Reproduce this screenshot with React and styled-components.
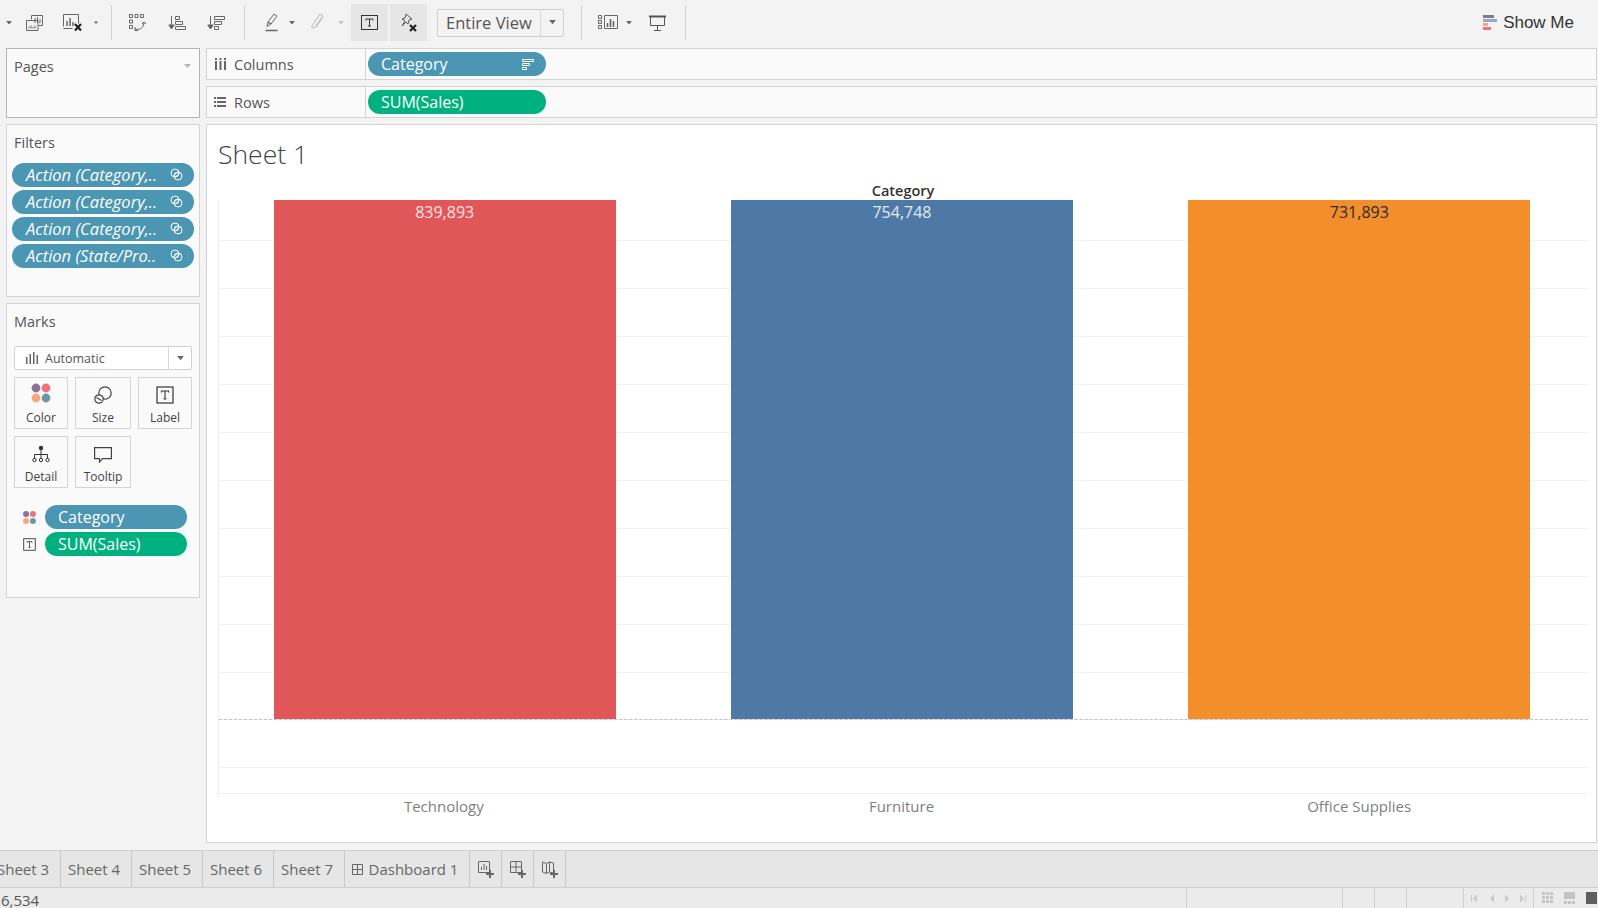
import React from "react";
import styled, { createGlobalStyle } from "styled-components";

const GlobalStyle = createGlobalStyle`
  html, body { margin: 0; padding: 0; background: #f3f3f3; }
  * { box-sizing: border-box; }
`;

const FONT = `"Open Sans", Lato, "Liberation Sans", sans-serif`;
const BLUE_PILL = "#4a96b3";
const GREEN_PILL = "#00b180";

const filters = ["Action (Category,..", "Action (Category,..", "Action (Category,..", "Action (State/Pro.."];
const bars = [
  { name: "Technology", value: "839,893", color: "#e15759", text: "#fbe3e3" },
  { name: "Furniture", value: "754,748", color: "#4e79a7", text: "#e3eaf2" },
  { name: "Office Supplies", value: "731,893", color: "#f28e2b", text: "#2b2b2b" },
];
const tabs = ["Sheet 3", "Sheet 4", "Sheet 5", "Sheet 6", "Sheet 7"];
const statusCells = [156, 32, 32, 57];

const Dots = ({ size = 22 }) => (
  <svg width={size} height={size} viewBox="0 0 22 22">
    <circle cx="6" cy="6" r="4.4" fill="#8a7299" />
    <circle cx="16" cy="6" r="4.4" fill="#f0707c" />
    <circle cx="6" cy="16" r="4.4" fill="#f5a77c" />
    <circle cx="16" cy="16" r="4.4" fill="#6c98a4" />
  </svg>
);

const TextBox = ({ size = 18, color = "#333" }) => (
  <svg width={size} height={size} viewBox="0 0 18 18" fill="none" stroke={color}>
    <rect x="1" y="1" width="16" height="16" strokeWidth="1.2" />
    <path d="M5.5 6.5V5h7v1.5M9 5v8M7.5 13h3" strokeWidth="1.1" />
  </svg>
);

const ToolTextIcon = () => (
  <svg width="17" height="15" viewBox="0 0 17 15" fill="none" stroke="#333">
    <rect x=".5" y=".5" width="16" height="14" />
    <path d="M5 5.500V4h7v1.500M8.500 4v7M7 11h3" />
  </svg>
);

const Caret = ({ color = "#666", w = 6 }) => (
  <svg width={w} height={w * 0.6} viewBox="0 0 8 5"><path d="M0 0h8L4 5z" fill={color} /></svg>
);

const Toolbar = styled.div`
  height: 42px;
  padding-top: 3px;
  display: flex;
  align-items: center;
  background: #f3f3f3;
  flex: none;
`;

const Tool = styled.div`
  width: ${(p) => p.$w}px;
  height: 37px;
  margin-left: ${(p) => p.$ml || 0}px;
  flex: none;
  display: flex;
  align-items: center;
  justify-content: center;
  background: ${(p) => (p.$active ? "#e6e6e6" : "transparent")};
`;

const Sep = styled.div`
  width: 1px;
  height: 35px;
  flex: none;
  margin-left: ${(p) => p.$ml}px;
  background: #d2d2d2;
`;

const ViewSelect = styled.div`
  width: 127px;
  height: 28px;
  margin-left: 10px;
  flex: none;
  display: flex;
  border: 1px solid #cfcfcf;
  border-radius: 2px;
  font: 16.5px ${FONT};
  color: #555;
`;

const ViewText = styled.div`
  flex: 1;
  padding-left: 8px;
  line-height: 25px;
  border-right: 1px solid #d8d8d8;
  white-space: nowrap;
`;

const ViewArrow = styled.div`
  width: 22px;
  display: flex;
  align-items: center;
  justify-content: center;
`;

const ShowMe = styled.div`
  margin-left: auto;
  margin-right: 24px;
  display: flex;
  align-items: center;
  gap: 6px;
  font: 17px "Liberation Sans", sans-serif;
  color: #333;
`;

const Workspace = styled.div`
  flex: 1;
  min-height: 0;
  display: flex;
  gap: 6px;
  padding: 6px 1px 7px 6px;
`;

const Side = styled.div`
  width: 194px;
  flex: none;
  display: flex;
  flex-direction: column;
  gap: 6px;
`;

const Card = styled.div`
  height: ${(p) => p.$h}px;
  background: #fafafa;
  border: 1px solid ${(p) => p.$border || "#d4d4d4"};
  padding: 0 7px;
  position: relative;
  font-family: ${FONT};
`;

const CardTitle = styled.div`
  font-size: 14.5px;
  color: #555;
  margin-top: 8px;
  line-height: 20px;
`;

const CardCaret = styled.div`
  position: absolute;
  top: 15px;
  right: 8px;
  display: flex;
`;

const Pill = styled.div`
  height: 24px;
  min-height: 24px;
  border-radius: 12px;
  background: ${(p) => (p.$green ? GREEN_PILL : BLUE_PILL)};
  color: #fff;
  font: ${(p) => (p.$italic ? "italic 16.5px" : "16px")}/21px ${FONT};
  display: flex;
  align-items: center;
  justify-content: space-between;
  white-space: nowrap;
  padding: 0 ${(p) => p.$pr || 10}px ${(p) => (p.$italic ? 2 : 0)}px ${(p) => p.$pl || 13}px;
  width: ${(p) => (p.$w ? `${p.$w}px` : "auto")};
  flex: ${(p) => (p.$w ? "none" : 1)};
`;

const FilterList = styled.div`
  display: flex;
  flex-direction: column;
  gap: 3px;
  margin: 10px -2px 0 -2px;
`;

const MarkSelect = styled.div`
  height: 24px;
  margin-top: 14px;
  display: flex;
  background: #fff;
  border: 1px solid #cfcfcf;
  border-radius: 2px;
  font-size: 12.5px;
  color: #555;
`;

const MarkSelectText = styled.div`
  flex: 1;
  display: flex;
  align-items: center;
  gap: 6px;
  padding-left: 11px;
  border-right: 1px solid #d8d8d8;
`;

const MarkSelectArrow = styled.div`
  width: 22px;
  display: flex;
  align-items: center;
  justify-content: center;
`;

const MarkGrid = styled.div`
  display: grid;
  grid-template-columns: 54px 56px 54px;
  grid-auto-rows: 52px;
  column-gap: 7px;
  row-gap: 7px;
  margin-top: 7px;
`;

const MarkButton = styled.div`
  border: 1px solid #d4d4d4;
  display: flex;
  flex-direction: column;
  align-items: center;
  font-size: 12px;
  color: #444;
`;

const MarkIcon = styled.div`
  height: 26px;
  display: flex;
  align-items: flex-end;
  justify-content: center;
  flex: none;
`;

const MarkLabel = styled.div`
  margin-top: 6px;
  line-height: 16px;
`;

const MarkPills = styled.div`
  display: flex;
  flex-direction: column;
  gap: 3px;
  margin: 17px 5px 0 5px;
`;

const MarkPillRow = styled.div`
  display: flex;
  align-items: center;
  gap: 6px;
`;

const PillIcon = styled.div`
  width: 20px;
  display: flex;
  justify-content: center;
`;

const Main = styled.div`
  flex: 1;
  min-width: 0;
  display: flex;
  flex-direction: column;
  gap: 6px;
`;

const Shelf = styled.div`
  height: 32px;
  display: flex;
  align-items: center;
  background: #fafafa;
  border: 1px solid #d4d4d4;
  font-family: ${FONT};
`;

const ShelfLabel = styled.div`
  width: 159px;
  height: 100%;
  flex: none;
  display: flex;
  align-items: center;
  gap: 8px;
  padding-left: ${(p) => p.$pl}px;
  font-size: 14.5px;
  color: #555;
  border-right: 1px solid #d4d4d4;
  margin-right: 2px;
`;

const View = styled.div`
  flex: 1;
  min-height: 0;
  background: #fff;
  border: 1px solid #d4d4d4;
  padding: 0 8px 0 11px;
  font-family: ${FONT};
`;

const Title = styled.div`
  margin-top: 13px;
  font-size: 26.5px;
  font-weight: 300;
  line-height: 32px;
  color: #444;
`;

const Header = styled.div`
  margin-top: 12px;
  height: 18px;
  line-height: 17px;
  text-align: center;
  font-size: 14.5px;
  font-weight: 600;
  color: #333;
`;

const Plot = styled.div`
  position: relative;
  height: 597px;
  border-left: 1px solid #f0f0f0;
`;

const GridLines = styled.div`
  position: absolute;
  inset: 40px 0 0 0;
  display: flex;
  flex-direction: column;
`;

const GridLine = styled.div`
  height: ${(p) => p.$h}px;
  flex: none;
  border-top: 1px solid #f1f1f1;
`;

const ZeroLine = styled.div`
  position: absolute;
  top: 519px;
  left: 0;
  right: 0;
  border-top: 1px dashed #c4c4c4;
`;

const BarRow = styled.div`
  position: relative;
  height: 519px;
  margin-left: -3px;
  display: grid;
  grid-template-columns: repeat(3, 1fr);
`;

const BarCell = styled.div`
  display: flex;
  justify-content: center;
`;

const Bar = styled.div`
  width: 342px;
  height: 519px;
  background: ${(p) => p.$color};
  color: ${(p) => p.$text};
  text-align: center;
  font-size: 16px;
  line-height: 25px;
`;

const AxisRow = styled.div`
  display: grid;
  grid-template-columns: repeat(3, 1fr);
  margin-left: -3px;
  font-size: 15px;
  line-height: 18px;
  color: #808080;
  text-align: center;
`;

const TabBar = styled.div`
  height: 38px;
  flex: none;
  display: flex;
  background: #e6e6e6;
  border-top: 1px solid #cfcfcf;
  border-bottom: 1px solid #cfcfcf;
  font: 15px/34px ${FONT};
  color: #666;
  overflow: hidden;
`;

const Tab = styled.div`
  flex: none;
  width: ${(p) => p.$w}px;
  margin-left: ${(p) => p.$ml || 0}px;
  padding-right: ${(p) => (p.$text ? 4 : 0)}px;
  border-right: 1px solid #c8c8c8;
  display: flex;
  align-items: center;
  justify-content: center;
  gap: 6px;
  white-space: nowrap;
`;

const StatusBar = styled.div`
  height: 20px;
  flex: none;
  display: flex;
  justify-content: flex-end;
  background: #ebebeb;
  font: 15px/16px ${FONT};
  color: #555;
`;

const StatusText = styled.div`
  margin-right: auto;
  padding: 4px 0 0 1px;
`;

const StatusCell = styled.div`
  width: ${(p) => p.$w}px;
  flex: none;
  border-left: 1px solid #cfcfcf;
`;

const StatusNav = styled.div`
  width: 71px;
  flex: none;
  display: flex;
  align-items: center;
  justify-content: center;
  border-left: 1px solid #cfcfcf;
  border-right: 1px solid #cfcfcf;
`;

const StatusViews = styled.div`
  width: 64px;
  flex: none;
  display: flex;
  align-items: center;
  justify-content: flex-start;
  padding-left: 8px;
`;

const Window = styled.div`
  width: 1598px;
  height: 908px;
  display: flex;
  flex-direction: column;
  overflow: hidden;
  background: #f3f3f3;
`;

const NewSheetIcon = ({ kind }) => (
  <svg width="16" height="18" viewBox="0 0 16 18" fill="none" stroke="#666" strokeWidth="1">
    {kind === "sheet" && <path d="M.5 1.5h11v11H.5zM3.5 10V7M6 10V4M8.5 10V6" />}
    {kind === "dash" && <path d="M.5 1.5h11v11H.5zM6 1.5v11M.5 7h11" />}
    {kind === "story" && <path d="M.5 2l4 1.500 3-1.500 4 1v10l-4-1-3 1.500-4-1.500zM4.500 3.500v10M7.500 2v10" />}
    <path d="M12 10v8M8 14h8" strokeWidth="2" />
  </svg>
);

const StackedIcon = () => (
  <svg width="17" height="16" viewBox="0 0 17 16" fill="none" stroke="#666">
    <path d="M5.500 4.500V.5h11v10h-4" />
    <path d="M.5 5.500h11.500v10H.5z" fill="#f3f3f3" />
    <path d="M3 13.500v-2M5 13.500v-3M7 13.500v-1.500M9 13.500v-3M9 8V3M11.500 8V2M14 8V4" />
  </svg>
);

const ClearIcon = () => (
  <svg width="20" height="18" viewBox="0 0 20 18" fill="none">
    <path d="M.5 12.500V.5h15v9M.5 14.500h9" stroke="#666" />
    <path d="M4 12V7M7 12V4M10 12V8" stroke="#666" strokeWidth="1.500" />
    <path d="M12 10l6 6.500M18 10l-6 6.500" stroke="#222" strokeWidth="2.200" />
  </svg>
);

const SwapIcon = () => (
  <svg width="18" height="18" viewBox="0 0 18 18" fill="none" stroke="#666">
    <path d="M.5.5h3v3h-3zM6 .5h3v3H6zM11.500.5h3v3h-3zM.5 6h3v3h-3zM.5 11.500h3v3h-3z" />
    <path d="M6 15c4 1 8 0 9-6M13 10l2-2 2 2M6 13v3.500h3" />
  </svg>
);

const SortIcon = ({ down }) => (
  <svg width="18" height="16" viewBox="0 0 18 16" fill="none" stroke="#666">
    <path d="M3.500 1v12M.8 10l2.700 4 2.700-4z" fill="#666" />
    {down ? (
      <path d="M7.500 1.500h10v3h-10zM7.500 6.500h7v3h-7zM7.500 11.500h4v3h-4z" />
    ) : (
      <path d="M7.500 1.500h4v3h-4zM7.500 6.500h7v3h-7zM7.500 11.500h10v3h-10z" />
    )}
  </svg>
);

const PenIcon = () => (
  <svg width="13" height="19" viewBox="0 0 13 19" fill="none" stroke="#666">
    <path d="M2 13.500L3 9l6-8 3 2-6 8z" />
    <path d="M3 9l3 2M.5 17.500h12" strokeWidth="1.400" />
  </svg>
);

const ClipIcon = () => (
  <svg width="13" height="19" viewBox="0 0 13 19" fill="none" stroke="#c4c4c4" strokeWidth="1.200">
    <path d="M10.500 5L4 14c-1.500 2-3.800.5-2.800-1.500L8 2.500C9.300.5 12.500 2 11.500 4.500L5 14" />
  </svg>
);

const PinClearIcon = () => (
  <svg width="20" height="19" viewBox="0 0 20 19" fill="none">
    <path d="M7 1l6 5-3 1-1 4-2-2-4 4 3-5-3-2 3-1z" stroke="#555" />
    <path d="M11 12l6 6M17 12l-6 6" stroke="#222" strokeWidth="2.200" />
  </svg>
);

const ShowMeChartIcon = () => (
  <svg width="20" height="15" viewBox="0 0 20 15" fill="none" stroke="#666">
    <path d="M.5.5h3v3h-3zM.5 5.500h3v3h-3zM.5 10.500h3v3h-3zM6.500.5h13v13h-13z" />
    <path d="M9.500 12V8M12.500 12V4M15.500 12V6" strokeWidth="1.600" />
  </svg>
);

const PresentIcon = () => (
  <svg width="17" height="16" viewBox="0 0 17 16" fill="none" stroke="#555">
    <path d="M0 1.500h17" strokeWidth="2" />
    <path d="M1.500 2v8.500h14V2M8.500 10.500v4.500M5 15.500h7" />
  </svg>
);

const ShowMeIcon = () => (
  <svg width="14" height="15" viewBox="0 0 14 15">
    <rect width="11" height="3" fill="#8a7299" />
    <rect y="4" width="14" height="3" fill="#8eaacf" />
    <rect y="8" width="5" height="3" fill="#f5a880" />
    <rect y="12" width="8" height="3" fill="#f3707e" />
  </svg>
);

const ColumnsIcon = () => (
  <svg width="11" height="12" viewBox="0 0 11 12" fill="#666">
    <rect x="0" y="3" width="2" height="9" />
    <rect x="4.500" y="3" width="2" height="9" />
    <rect x="9" y="3" width="2" height="9" />
    <rect x="0" y="0" width="2" height="2" />
    <rect x="4.500" y="0" width="2" height="2" />
    <rect x="9" y="0" width="2" height="2" />
  </svg>
);

const RowsIcon = () => (
  <svg width="12" height="10" viewBox="0 0 12 10" fill="#666">
    <rect x="0" y="0" width="2" height="2" />
    <rect x="3" y="0" width="9" height="2" />
    <rect x="0" y="4" width="2" height="2" />
    <rect x="3" y="4" width="9" height="2" />
    <rect x="0" y="8" width="2" height="2" />
    <rect x="3" y="8" width="9" height="2" />
  </svg>
);

const PillSortIcon = () => (
  <svg width="12" height="11" viewBox="0 0 12 11" fill="none" stroke="#fff">
    <path d="M.5.5h11v2H.5zM.5 4.500h7v2h-7zM.5 8.500h4v2h-4z" />
  </svg>
);

const LinkIcon = () => (
  <svg width="13" height="13" viewBox="0 0 13 13" fill="none" stroke="#fff" strokeWidth="1">
    <circle cx="5" cy="5" r="4" />
    <circle cx="8" cy="8" r="4" />
    <path d="M3.500 8L8 3.500M5 9.500L9.500 5" />
  </svg>
);

const AutoBarsIcon = () => (
  <svg width="13" height="12" viewBox="0 0 13 12" fill="#666">
    <rect x="0" y="5" width="1.500" height="7" />
    <rect x="3.500" y="2" width="1.500" height="10" />
    <rect x="7" y="0" width="1.500" height="12" />
    <rect x="10.500" y="3" width="1.500" height="9" />
  </svg>
);

const SizeIcon = () => (
  <svg width="18" height="18" viewBox="0 0 18 18" fill="none" stroke="#444" strokeWidth="1.200">
    <circle cx="11" cy="7" r="6.200" />
    <circle cx="5" cy="13" r="4.200" fill="#fafafa" />
    <path d="M2.500 11.500l5 3" />
  </svg>
);

const DetailIcon = () => (
  <svg width="18" height="18" viewBox="0 0 18 18" fill="#333" stroke="#333">
    <circle cx="9" cy="3" r="2.200" stroke="none" />
    <path d="M9 5v8M2.500 9.500h13M2.500 9.500v4M15.500 9.500v4" fill="none" />
    <circle cx="2.500" cy="15" r="1.700" fill="none" />
    <circle cx="9" cy="15" r="1.700" fill="none" />
    <circle cx="15.500" cy="15" r="1.700" fill="none" />
  </svg>
);

const TooltipIcon = () => (
  <svg width="18" height="16" viewBox="0 0 18 16" fill="none" stroke="#444" strokeWidth="1.200">
    <path d="M.6.6h16.800v11H8.500l-3 3.500v-3.500H.6z" />
  </svg>
);

const NavIcons = () => (
  <svg width="55" height="9" viewBox="0 0 55 9" fill="#c8c8c8">
    <rect x="0" y="1" width="1" height="7" />
    <path d="M6 .5v8L2 4.500z" />
    <path d="M23 .5v8l-4-4z" />
    <path d="M34 .5v8l4-4z" />
    <path d="M49 .5v8l4-4z" />
    <rect x="54" y="1" width="1" height="7" />
  </svg>
);

const ViewIcons = () => (
  <svg width="56" height="12" viewBox="0 0 56 12">
    <g fill="#c4c4c4">
      <rect x="0" y="0" width="3" height="3" />
      <rect x="4" y="0" width="3" height="3" />
      <rect x="8" y="0" width="3" height="3" />
      <rect x="0" y="4" width="3" height="3" />
      <rect x="4" y="4" width="3" height="3" />
      <rect x="8" y="4" width="3" height="3" />
      <rect x="0" y="8" width="3" height="3" />
      <rect x="4" y="8" width="3" height="3" />
      <rect x="8" y="8" width="3" height="3" />
      <rect x="22" y="0" width="11" height="7" />
      <rect x="22" y="9" width="3" height="3" />
      <rect x="26" y="9" width="3" height="3" />
      <rect x="30" y="9" width="3" height="3" />
    </g>
    <rect x="44" y="0" width="11" height="12" fill="#5e5e5e" />
  </svg>
);

const DashIcon = () => (
  <svg width="11" height="11" viewBox="0 0 11 11" fill="none" stroke="#666">
    <path d="M.5.5h10v10H.5zM5.500.5v10M.5 5.500h10" />
  </svg>
);

const App = () => {
  const gridHeights = [48, 48, 48, 48, 48, 48, 48, 48, 48, 47, 48, 26, 1];

  return (
    <>
      <GlobalStyle />
      <Window>
        <Toolbar>
          <Tool $w={18}><Caret /></Tool>
          <Tool $w={33}><StackedIcon /></Tool>
          <Tool $w={43}><ClearIcon /></Tool>
          <Tool $w={4}><Caret /></Tool>
          <Sep $ml={13} />
          <Tool $w={38} $ml={7}><SwapIcon /></Tool>
          <Tool $w={38} $ml={1}><SortIcon /></Tool>
          <Tool $w={38} $ml={1}><SortIcon down /></Tool>
          <Sep $ml={9} />
          <Tool $w={36} $ml={8}><PenIcon /></Tool>
          <Tool $w={6}><Caret /></Tool>
          <Tool $w={38} $ml={3}><ClipIcon /></Tool>
          <Tool $w={6} $ml={2}><Caret color="#c4c4c4" /></Tool>
          <Tool $w={37} $ml={7} $active><ToolTextIcon /></Tool>
          <Tool $w={37} $ml={2} $active><PinClearIcon /></Tool>
          <ViewSelect>
            <ViewText>Entire View</ViewText>
            <ViewArrow><Caret w={7} /></ViewArrow>
          </ViewSelect>
          <Sep $ml={17} />
          <Tool $w={34} $ml={9}><ShowMeChartIcon /></Tool>
          <Tool $w={6} $ml={1}><Caret /></Tool>
          <Tool $w={32} $ml={9}><PresentIcon /></Tool>
          <Sep $ml={12} />
          <ShowMe><ShowMeIcon />Show Me</ShowMe>
        </Toolbar>

        <Workspace>
          <Side>
            <Card $h={70} $border="#b4b4b4">
              <CardTitle>Pages</CardTitle>
              <CardCaret><Caret color="#b8b8b8" w={7} /></CardCaret>
            </Card>
            <Card $h={173}>
              <CardTitle>Filters</CardTitle>
              <FilterList>
                {filters.map((label, i) => (
                  <Pill key={i} $italic $pl={14} $pr={11}>
                    {label}
                    <LinkIcon />
                  </Pill>
                ))}
              </FilterList>
            </Card>
            <Card $h={295}>
              <CardTitle>Marks</CardTitle>
              <MarkSelect>
                <MarkSelectText><AutoBarsIcon />Automatic</MarkSelectText>
                <MarkSelectArrow><Caret w={7} /></MarkSelectArrow>
              </MarkSelect>
              <MarkGrid>
                <MarkButton>
                  <MarkIcon><Dots /></MarkIcon>
                  <MarkLabel>Color</MarkLabel>
                </MarkButton>
                <MarkButton>
                  <MarkIcon><SizeIcon /></MarkIcon>
                  <MarkLabel>Size</MarkLabel>
                </MarkButton>
                <MarkButton>
                  <MarkIcon><TextBox /></MarkIcon>
                  <MarkLabel>Label</MarkLabel>
                </MarkButton>
                <MarkButton>
                  <MarkIcon><DetailIcon /></MarkIcon>
                  <MarkLabel>Detail</MarkLabel>
                </MarkButton>
                <MarkButton>
                  <MarkIcon><TooltipIcon /></MarkIcon>
                  <MarkLabel>Tooltip</MarkLabel>
                </MarkButton>
              </MarkGrid>
              <MarkPills>
                <MarkPillRow>
                  <PillIcon><Dots size={15} /></PillIcon>
                  <Pill>Category</Pill>
                </MarkPillRow>
                <MarkPillRow>
                  <PillIcon><TextBox size={13} /></PillIcon>
                  <Pill $green>SUM(Sales)</Pill>
                </MarkPillRow>
              </MarkPills>
            </Card>
          </Side>

          <Main>
            <Shelf>
              <ShelfLabel $pl={8}><ColumnsIcon />Columns</ShelfLabel>
              <Pill $w={178} $pr={12}>Category<PillSortIcon /></Pill>
            </Shelf>
            <Shelf>
              <ShelfLabel $pl={7}><RowsIcon />Rows</ShelfLabel>
              <Pill $w={178} $green>SUM(Sales)</Pill>
            </Shelf>
            <View>
              <Title>Sheet 1</Title>
              <Header>Category</Header>
              <Plot>
                <GridLines>
                  {gridHeights.map((h, i) => <GridLine key={i} $h={h} />)}
                </GridLines>
                <BarRow>
                  {bars.map((bar) => (
                    <BarCell key={bar.name}>
                      <Bar $color={bar.color} $text={bar.text}>{bar.value}</Bar>
                    </BarCell>
                  ))}
                </BarRow>
                <ZeroLine />
              </Plot>
              <AxisRow>
                {bars.map((bar) => <div key={bar.name}>{bar.name}</div>)}
              </AxisRow>
            </View>
          </Main>
        </Workspace>

        <TabBar>
          {tabs.map((tab, i) => (
            <Tab key={tab} $w={71} $ml={i === 0 ? -10 : 0} $text>{tab}</Tab>
          ))}
          <Tab $w={125} $text><DashIcon />Dashboard 1</Tab>
          <Tab $w={32}><NewSheetIcon kind="sheet" /></Tab>
          <Tab $w={32}><NewSheetIcon kind="dash" /></Tab>
          <Tab $w={32}><NewSheetIcon kind="story" /></Tab>
        </TabBar>

        <StatusBar>
          <StatusText>6,534</StatusText>
          {statusCells.map((w, i) => <StatusCell key={i} $w={w} />)}
          <StatusNav><NavIcons /></StatusNav>
          <StatusViews><ViewIcons /></StatusViews>
        </StatusBar>
      </Window>
    </>
  );
};

export default App;
